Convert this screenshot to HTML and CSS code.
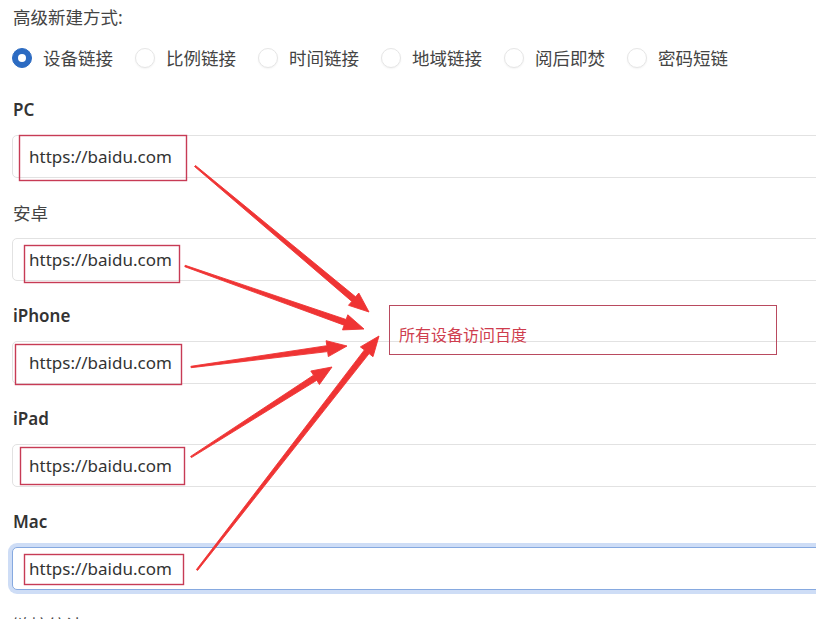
FILE: index.html
```html
<!DOCTYPE html>
<html lang="zh-CN">
<head>
<meta charset="utf-8">
<title>高级新建方式</title>
<link rel="stylesheet" href="styles.css">
</head>
<body>
<div class="page">
  <div class="title">高级新建方式:</div>
  <div class="radios">
    <div class="radio-item"><span class="radio checked"></span><span class="radio-text">设备链接</span></div>
    <div class="radio-item"><span class="radio"></span><span class="radio-text">比例链接</span></div>
    <div class="radio-item"><span class="radio"></span><span class="radio-text">时间链接</span></div>
    <div class="radio-item"><span class="radio"></span><span class="radio-text">地域链接</span></div>
    <div class="radio-item"><span class="radio"></span><span class="radio-text">阅后即焚</span></div>
    <div class="radio-item"><span class="radio"></span><span class="radio-text">密码短链</span></div>
  </div>

  <div class="field">
    <div class="label">PC</div>
    <div class="input">https://baidu.com</div>
  </div>
  <div class="field">
    <div class="label cjk">安卓</div>
    <div class="input">https://baidu.com</div>
  </div>
  <div class="field">
    <div class="label">iPhone</div>
    <div class="input">https://baidu.com</div>
  </div>
  <div class="field">
    <div class="label">iPad</div>
    <div class="input">https://baidu.com</div>
  </div>
  <div class="field">
    <div class="label">Mac</div>
    <div class="input focus">https://baidu.com</div>
  </div>
  <div class="field">
    <div class="label cjk">链接统计</div>
  </div>

  <svg class="annot" width="816" height="619" viewBox="0 0 816 619" xmlns="http://www.w3.org/2000/svg">
    <g fill="none" stroke="#c73b55" stroke-width="1.4">
      <rect x="19.5" y="135.5" width="167" height="45"/>
      <rect x="24.5" y="245.5" width="155" height="37"/>
      <rect x="15.5" y="344.5" width="166" height="40"/>
      <rect x="20.5" y="447.5" width="164" height="37"/>
      <rect x="24.5" y="554.5" width="159" height="30"/>
    </g>
    <g fill="#ef3434" stroke="#ef3434" stroke-width="0.9" stroke-linejoin="round">
      <polygon points="194.5,166.5 351.8,301.4 348.5,305.3 369,312 358.8,293.0 355.6,296.8 195.5,165.5"/>
      <polygon points="184.8,266.7 344.1,325.2 342.5,329.9 364,329 347.8,314.8 346.1,319.5 185.2,265.3"/>
      <polygon points="191.1,367.7 327.6,351.6 328.3,356.6 347,346 326.1,340.7 326.8,345.7 190.9,366.3"/>
      <polygon points="191.4,457.6 316.8,380.3 319.4,384.5 332,367 310.8,371.0 313.5,375.2 190.6,456.4"/>
      <polygon points="197.6,570.4 369.1,353.6 373.0,356.7 379,336 360.4,346.9 364.4,349.9 196.4,569.6"/>
    </g>
  </svg>
  <div class="note">所有设备访问百度</div>
</div>
</body>
</html>
```

FILE: styles.css
```css
html, body {
  margin: 0;
  padding: 0;
  overflow: hidden;
  background: #ffffff;
}

body {
  width: 816px;
  height: 619px;
  font-family: "Noto Sans", "Noto Sans CJK SC", sans-serif;
  color: #3a3a3a;
}

.page {
  position: relative;
  width: 816px;
  height: 619px;
  padding: 5px 0 0 12px;
  box-sizing: border-box;
}

.title {
  font-size: 17.5px;
  line-height: 24px;
  color: #444;
  padding-left: 1px;
}

.radios {
  display: flex;
  align-items: center;
  gap: 22px;
  margin-top: 17px;
  height: 24px;
}

.radio-item {
  display: flex;
  align-items: center;
  gap: 11px;
}

.radio {
  width: 20px;
  height: 20px;
  border-radius: 50%;
  box-sizing: border-box;
  border: 1px solid #e6e6e6;
  box-shadow: 0 1px 2px rgba(0, 0, 0, 0.05);
  background: #fff;
  position: relative;
}

.radio.checked {
  background: #2c6bc2;
  border-color: #2c6bc2;
  box-shadow: none;
}

.radio.checked::after {
  content: "";
  position: absolute;
  left: 5px;
  top: 5px;
  width: 8px;
  height: 8px;
  border-radius: 50%;
  background: #fff;
}

.radio-text {
  font-size: 17.5px;
  line-height: 24px;
  color: #444;
}

.field {
  margin-top: 23px;
}

.radios + .field {
  margin-top: 28px;
}

.label {
  font-size: 17px;
  line-height: 24px;
  font-weight: 600;
  color: #333;
  padding-left: 1px;
}

.label.cjk {
  font-weight: 400;
  font-size: 17.5px;
  color: #444;
}

.input {
  margin-top: 13px;
  margin-right: -30px;
  height: 43px;
  box-sizing: border-box;
  border: 1px solid #e2e2e2;
  border-radius: 5px;
  padding-left: 16px;
  display: flex;
  align-items: center;
  font-size: 17px;
  color: #333;
  background: #fff;
}

.input.focus {
  border-color: #86a9e0;
  box-shadow: 0 0 0 4px rgba(60, 120, 220, 0.25);
}

.annot {
  position: absolute;
  left: 0;
  top: 0;
  pointer-events: none;
}

.note {
  position: absolute;
  left: 389px;
  top: 305px;
  width: 388px;
  height: 50px;
  box-sizing: border-box;
  border: 1px solid #b94a5f;
  padding: 19px 0 0 9px;
  font-size: 16px;
  line-height: 20px;
  color: #cf3d4e;
}
```
